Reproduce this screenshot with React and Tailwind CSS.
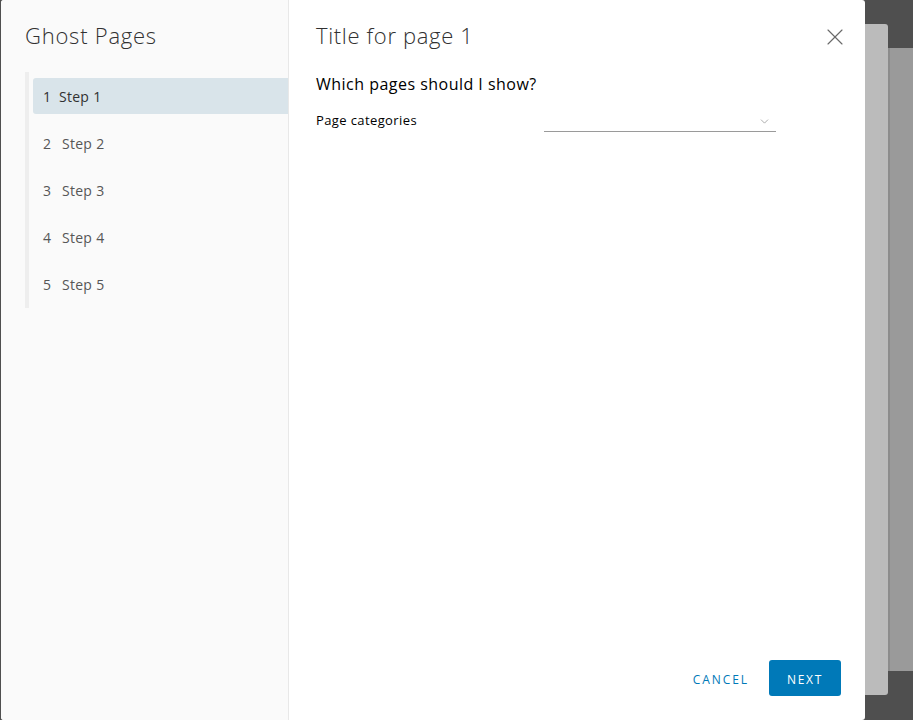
import { X, ChevronDown } from 'lucide-react';

const steps = ['Step 1', 'Step 2', 'Step 3', 'Step 4', 'Step 5'];

export default function App() {
  return (
    <div className="relative flex h-[720px] w-[913px] overflow-hidden bg-[#4f4f4f] font-['Open_Sans',sans-serif]">
      {/* stacked pages behind the modal */}
      <div className="absolute left-[860px] top-[24px] h-[671px] w-[28px] rounded-[3px] bg-[#bbbbbb] shadow-[inset_3px_0_0_#a8a8a8]" />
      <div className="absolute left-[888px] top-[48px] h-[623px] w-[30px] bg-[#9a9a9a] shadow-[inset_2px_0_0_#8c8c8c]" />

      {/* modal */}
      <div className="relative z-10 ml-px flex h-[720px] w-[864px] overflow-hidden rounded-[3px] bg-white">
        {/* nav */}
        <div className="flex w-[288px] shrink-0 flex-col border-r border-[#e8e8e8] bg-[#fafafa]">
          <h1 className="pl-6 pt-[21px] text-[22px] font-light leading-[28px] tracking-[0.035em] text-[#313131]">Ghost Pages</h1>
          <ul className="ml-6 mt-[23px] flex flex-col gap-[11px] border-l-4 border-[#eeeeee] py-[6px]">
            {steps.map((s, i) => (
              <li
                key={s}
                className={`ml-1 flex h-9 items-center rounded-l-[3px] pl-[10px] text-[14px] tracking-[0.02em] ${
                  i === 0 ? 'bg-[#d9e4ea] font-medium text-[#313131]' : 'text-[#565656]'
                }`}
              >
                <span className={i === 0 ? 'w-[16px]' : 'w-[19px]'}>{i + 1}</span>
                <span>{s}</span>
              </li>
            ))}
          </ul>
        </div>

        {/* content */}
        <div className="flex flex-1 flex-col pl-[27px] pr-6">
          <div className="flex h-[28px] items-center justify-between mt-[21px]">
            <h2 className="text-[22px] font-light leading-[28px] tracking-[0.03em] text-[#313131]">Title for page 1</h2>
            <X className="-mb-[2px] -mr-2 mt-[2px] h-7 w-7 shrink-0 text-[#6a6a6a]" strokeWidth={1} />
          </div>
          <h3 className="mt-[25px] text-[16px] leading-[20px] tracking-[0.03em] text-[#000000]">Which pages should I show?</h3>
          <div className="mt-[17px] flex items-start">
            <label className="w-[228px] pt-[1px] text-[13px] leading-[16px] tracking-[0.03em] text-[#000000]">Page categories</label>
            <div className="flex h-[21px] w-[232px] items-start justify-end border-b border-[#9a9a9a] pr-[5px] pt-[4px]">
              <ChevronDown className="h-[13px] w-[13px] text-[#8a8a8a]" strokeWidth={1.3} />
            </div>
          </div>
          <div className="flex-1" />
          <div className="mb-[24px] flex items-center justify-end gap-5">
            <button className="pt-[3px] text-[12px] tracking-[0.16em] text-[#0079b8]">CANCEL</button>
            <button className="h-9 w-[72px] rounded-[3px] bg-[#0079b8] pt-[3px] text-[12px] tracking-[0.14em] text-white">NEXT</button>
          </div>
        </div>
      </div>
    </div>
  );
}
